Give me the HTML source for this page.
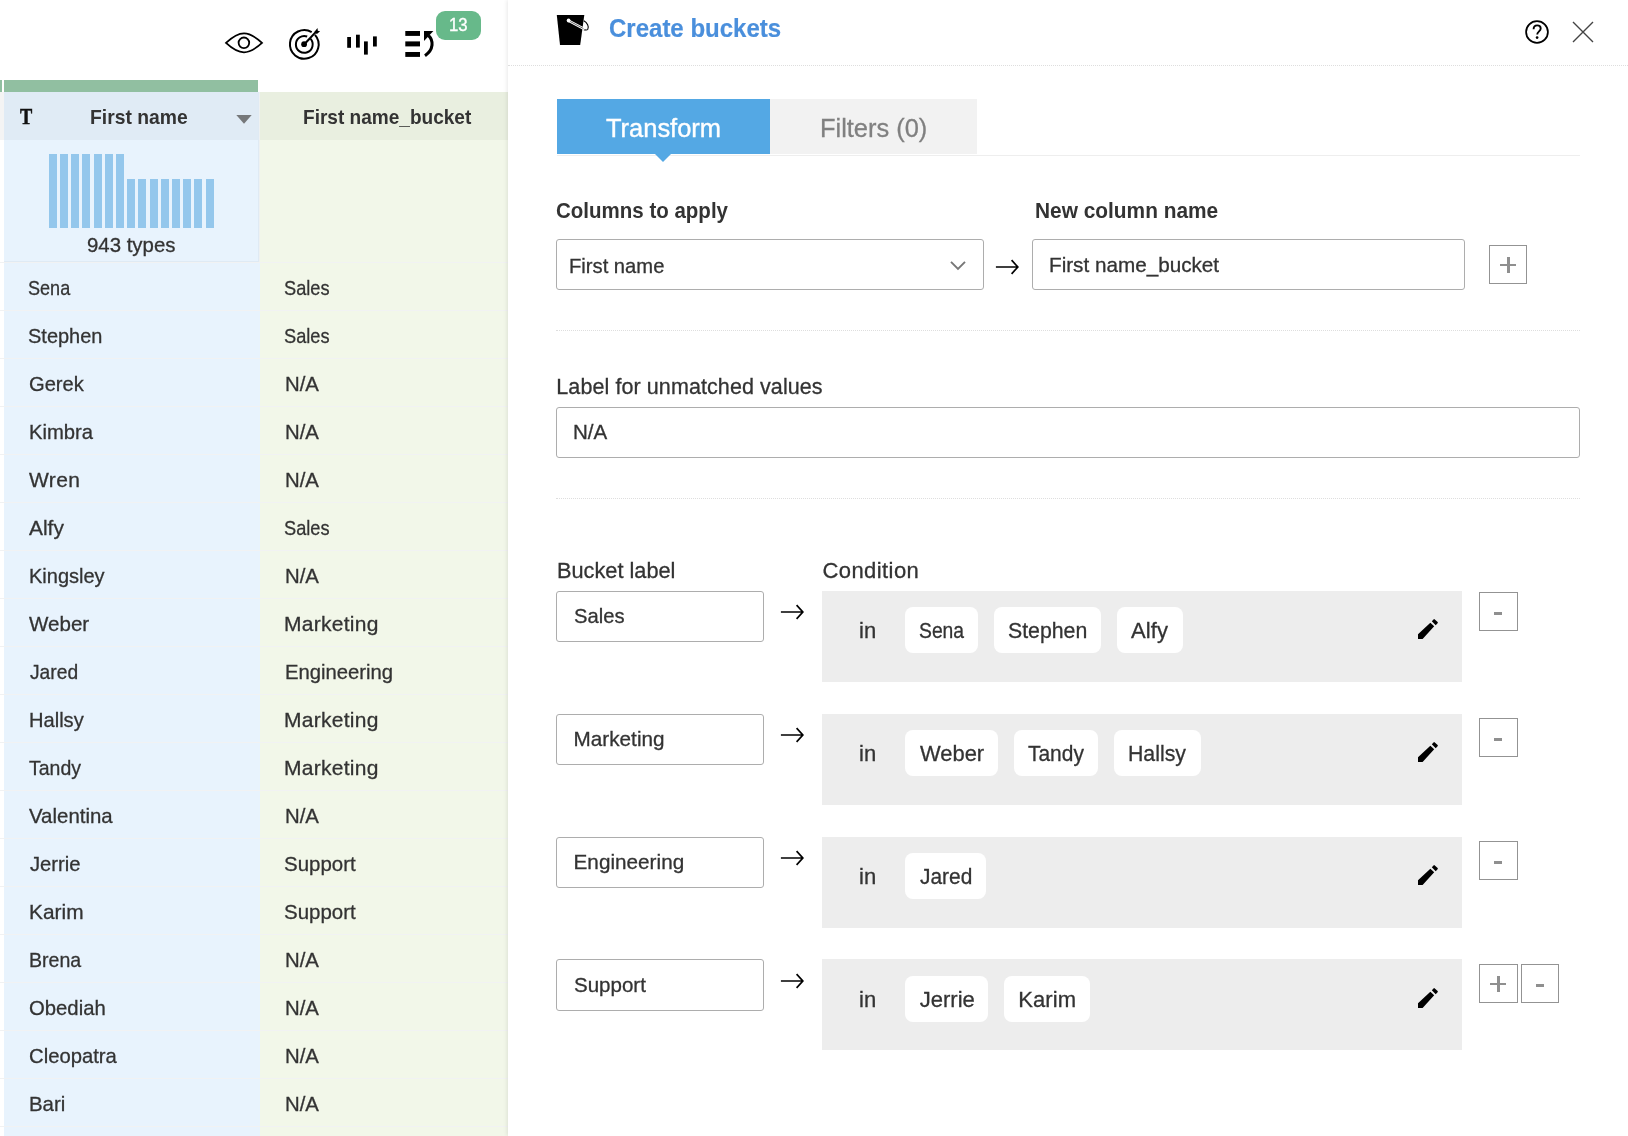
<!DOCTYPE html>
<html lang="en"><head><meta charset="utf-8"><title>Create buckets</title>
<style>
*{box-sizing:border-box;margin:0;padding:0}
html,body{width:1628px;height:1136px;overflow:hidden;background:#fff}
body{position:relative;font-family:"Liberation Sans",sans-serif}
.abs,.t,.rl,.hb,.inp,.cond,.chip,.sq,.box{position:absolute}
.t{white-space:nowrap;transform-origin:0 50%;-webkit-text-stroke:0.3px}
#left{position:absolute;left:0;top:0;width:508px;height:1136px;background:#fff;overflow:hidden}
#right{position:absolute;left:508px;top:0;width:1120px;height:1136px;background:#fff;box-shadow:-1px 0 4px rgba(0,0,0,.09)}
.rl{left:0;width:508px;height:1px;background:#f1f2f3}
.hb{width:8px;background:#94c7ec}
.inp{background:#fff;border:1px solid #adadad;border-radius:3px}
.cond{background:#ededed}
.chip{background:#fff;border-radius:8px}
.sq{width:39px;height:39px;border:1px solid #939393;background:#fff}
.sq i{position:absolute;background:#8f8f8f}
.sq .mn{left:14px;top:19px;width:8.3px;height:3px}
.sq .ph{left:10px;top:17.9px;width:16px;height:2.3px}
.sq .pv{left:16.9px;top:11.1px;width:2.8px;height:16px}
#txt{position:absolute;left:0;top:0;width:1628px;height:1136px;will-change:transform}
.dot{position:absolute;height:0;border-top:1px dotted #dedede}
</style></head>
<body>
<div id="left">
<div class="box" style="left:0;top:92px;width:4px;height:48px;background:#f4f4f4"></div>
<div class="box" style="left:4px;top:92px;width:256px;height:1044px;background:#e8f3fd"></div>
<div class="box" style="left:260px;top:92px;width:248px;height:1044px;background:#f2f7e9"></div>
<div class="box" style="left:4px;top:92px;width:255px;height:48px;background:#e0ebf5"></div>
<div class="box" style="left:260px;top:92px;width:248px;height:48px;background:#e9efe0"></div>
<div class="box" style="left:259px;top:92px;width:1px;height:170px;background:#eef1f1"></div>
<div class="box" style="left:258px;top:92px;width:1px;height:170px;background:#dfeaf4"></div>
<div class="box" style="left:4px;top:261px;width:255px;height:1px;background:#dfeaf4"></div>
<div class="box" style="left:0;top:80px;width:2px;height:12px;background:#91bfa1"></div>
<div class="box" style="left:4px;top:80px;width:254.4px;height:12px;background:#91bfa1"></div>
<div class="rl" style="top:262px"></div>
<div class="rl" style="top:310px"></div>
<div class="rl" style="top:358px"></div>
<div class="rl" style="top:406px"></div>
<div class="rl" style="top:454px"></div>
<div class="rl" style="top:502px"></div>
<div class="rl" style="top:550px"></div>
<div class="rl" style="top:598px"></div>
<div class="rl" style="top:646px"></div>
<div class="rl" style="top:694px"></div>
<div class="rl" style="top:742px"></div>
<div class="rl" style="top:790px"></div>
<div class="rl" style="top:838px"></div>
<div class="rl" style="top:886px"></div>
<div class="rl" style="top:934px"></div>
<div class="rl" style="top:982px"></div>
<div class="rl" style="top:1030px"></div>
<div class="rl" style="top:1078px"></div>
<div class="rl" style="top:1126px"></div>
<div class="hb" style="left:49.0px;top:154px;height:74px"></div>
<div class="hb" style="left:60.0px;top:154px;height:74px"></div>
<div class="hb" style="left:71.0px;top:154px;height:74px"></div>
<div class="hb" style="left:82.0px;top:154px;height:74px"></div>
<div class="hb" style="left:94.0px;top:154px;height:74px"></div>
<div class="hb" style="left:105.0px;top:154px;height:74px"></div>
<div class="hb" style="left:116.0px;top:154px;height:74px"></div>
<div class="hb" style="left:127.0px;top:179px;height:49px"></div>
<div class="hb" style="left:138.0px;top:179px;height:49px"></div>
<div class="hb" style="left:150.0px;top:179px;height:49px"></div>
<div class="hb" style="left:161.0px;top:179px;height:49px"></div>
<div class="hb" style="left:172.0px;top:179px;height:49px"></div>
<div class="hb" style="left:183.0px;top:179px;height:49px"></div>
<div class="hb" style="left:194.0px;top:179px;height:49px"></div>
<div class="hb" style="left:206.0px;top:179px;height:49px"></div>
<svg class="abs" style="left:236px;top:115px" width="16" height="9" viewBox="0 0 16 9"><path d="M0.3 0H15.7L8 8.7Z" fill="#76787a"/></svg>
<!-- toolbar icons -->
<svg class="abs" style="left:0;top:0" width="508" height="70" viewBox="0 0 508 70">
 <path d="M226 42.9C232.6 36.8 238.5 33.4 244 33.4S255.4 36.8 262 42.9C255.4 49 249.5 52.3 244 52.3S232.6 49 226 42.9Z" fill="none" stroke="#000" stroke-width="1.8" stroke-linejoin="miter"/>
 <circle cx="243.9" cy="42.8" r="5.3" fill="none" stroke="#000" stroke-width="1.8"/>
 <path d="M314.96 34.8A14.35 14.35 0 1 1 311.69 32.1" fill="none" stroke="#000" stroke-width="2"/>
 <path d="M310.64 38.89A8.4 8.4 0 1 1 307.17 36.5" fill="none" stroke="#000" stroke-width="2"/>
 <circle cx="304.1" cy="44.2" r="2.9" fill="#000"/>
 <path d="M304.3 44.2L316.2 31.6" stroke="#000" stroke-width="2.1"/>
 <path d="M314.3 31.9L317.5 27.9L317.8 30.8L320.1 31.3L316.9 33.9Z" fill="#000"/>
 <rect x="347.2" y="37" width="3.8" height="10.8" fill="#000"/><rect x="356" y="34.7" width="3.8" height="12.9" fill="#000"/>
 <rect x="364" y="41.4" width="3.8" height="13.2" fill="#000"/><rect x="373" y="36.4" width="3.8" height="10.1" fill="#000"/>
 <rect x="405.3" y="31" width="14.7" height="4.9" fill="#000"/><rect x="405.3" y="41.4" width="14.7" height="5" fill="#000"/><rect x="405.3" y="52" width="14.7" height="4.9" fill="#000"/>
 <path d="M424 31.1H433.4L424 41Z" fill="#000"/>
 <path d="M428.6 35.6C433.5 40.5 434 49.5 425 55.7" fill="none" stroke="#000" stroke-width="3.1"/>
</svg>
<div class="box" style="left:436px;top:11px;width:45px;height:29px;border-radius:9px;background:#67b98a"></div>
</div>
<div id="right"></div>
<!-- right panel (page coords) -->
<svg class="abs" style="left:550px;top:8px" width="44" height="42" viewBox="550 8 44 42">
 <path d="M556.8 15H584.3L580.2 44.9H560Z" fill="#000"/>
 <path d="M583.8 20.7C587.2 22.4 589.3 26.8 587.8 29.2C587 30.4 585.2 30.2 583 29.2" fill="none" stroke="#000" stroke-width="1.1"/>
 <path d="M568.9 20.8L583.6 28.6" stroke="#fff" stroke-width="2.5" stroke-linecap="round"/>
 <path d="M569.6 21.2L583.4 28.5" stroke="#000" stroke-width="0.6"/>
 <circle cx="568.6" cy="20.5" r="1.9" fill="#fff"/>
</svg>
<svg class="abs" style="left:1523px;top:18px" width="28" height="28" viewBox="0 0 28 28">
 <circle cx="14" cy="14" r="10.9" fill="none" stroke="#000" stroke-width="1.75"/>
 <path d="M10.6 11.2C10.6 8.6 12.2 7.4 14.2 7.4C16.4 7.4 17.7 8.8 17.7 10.6C17.7 13.2 14.2 13.6 14.2 16.6" fill="none" stroke="#000" stroke-width="1.9"/>
 <circle cx="14.1" cy="19.6" r="1.35" fill="#000"/>
</svg>
<svg class="abs" style="left:1571px;top:20px" width="24" height="24" viewBox="0 0 24 24"><path d="M2 2L22 22M22 2L2 22" stroke="#444" stroke-width="1.4"/></svg>
<div class="dot" style="left:508px;top:65px;width:1120px"></div>
<div class="box" style="left:557px;top:99px;width:213px;height:55px;background:#54a8e4"></div>
<div class="box" style="left:770px;top:99px;width:207px;height:55px;background:#f2f2f2"></div>
<div class="box" style="left:557px;top:154.6px;width:1023px;height:1px;background:#eeeeee"></div>
<svg class="abs" style="left:653px;top:154px" width="20" height="9" viewBox="0 0 20 9"><path d="M2 0H18L10 8Z" fill="#54a8e4"/></svg>
<div class="inp" style="left:556px;top:239px;width:428px;height:51px"></div>
<svg class="abs" style="left:949px;top:259px" width="18" height="13" viewBox="0 0 18 13"><path d="M2 2.8L9 10L16 2.8" fill="none" stroke="#777" stroke-width="1.9"/></svg>
<svg class="abs" style="left:995.3px;top:258px" width="26" height="18" viewBox="0 0 26 18"><path d="M0.9 9H22.6M16.6 2.1L22.85 9L16.6 15.9" fill="none" stroke="#000" stroke-width="1.7"/></svg>
<div class="inp" style="left:1032px;top:239px;width:433px;height:51px"></div>
<div class="sq" style="left:1489px;top:245px;width:38px"><i class="ph"></i><i class="pv"></i></div>
<div class="dot" style="left:556px;top:330px;width:1024px"></div>
<div class="inp" style="left:556px;top:407px;width:1024px;height:51px"></div>
<div class="dot" style="left:556px;top:497.5px;width:1024px"></div>
<div class="inp" style="left:556px;top:591px;width:208px;height:51px"></div>
<svg class="abs" style="left:780px;top:603.3px" width="26" height="18" viewBox="0 0 26 18"><path d="M0.9 9H22.6M16.6 2.1L22.85 9L16.6 15.9" fill="none" stroke="#000" stroke-width="1.7"/></svg>
<div class="cond" style="left:822px;top:591px;width:640px;height:91px"></div>
<div class="chip" style="left:905.1px;top:606.9px;width:73.0px;height:46.2px"></div>
<div class="chip" style="left:994.3px;top:606.9px;width:106.9px;height:46.2px"></div>
<div class="chip" style="left:1117.1px;top:606.9px;width:65.9px;height:46.2px"></div>
<svg class="abs" style="left:1417px;top:618.0px" width="22" height="22" viewBox="0 0 22 22"><path d="M1 16.2L13.35 4.8L17.2 8.3L5.6 21H1ZM14.8 3.2L16.5 1.4Q17.1 0.8 17.8 1.4L20.6 4Q21.2 4.6 20.6 5.2L18.7 7.2Z" fill="#000"/></svg>
<div class="sq" style="left:1479px;top:592px"><i class="mn"></i></div>
<div class="inp" style="left:556px;top:714px;width:208px;height:51px"></div>
<svg class="abs" style="left:780px;top:726.3px" width="26" height="18" viewBox="0 0 26 18"><path d="M0.9 9H22.6M16.6 2.1L22.85 9L16.6 15.9" fill="none" stroke="#000" stroke-width="1.7"/></svg>
<div class="cond" style="left:822px;top:714px;width:640px;height:91px"></div>
<div class="chip" style="left:905.1px;top:729.9px;width:92.9px;height:46.2px"></div>
<div class="chip" style="left:1013.9px;top:729.9px;width:84.1px;height:46.2px"></div>
<div class="chip" style="left:1114.2px;top:729.9px;width:86.5px;height:46.2px"></div>
<svg class="abs" style="left:1417px;top:741.0px" width="22" height="22" viewBox="0 0 22 22"><path d="M1 16.2L13.35 4.8L17.2 8.3L5.6 21H1ZM14.8 3.2L16.5 1.4Q17.1 0.8 17.8 1.4L20.6 4Q21.2 4.6 20.6 5.2L18.7 7.2Z" fill="#000"/></svg>
<div class="sq" style="left:1479px;top:718px"><i class="mn"></i></div>
<div class="inp" style="left:556px;top:837px;width:208px;height:51px"></div>
<svg class="abs" style="left:780px;top:849.3px" width="26" height="18" viewBox="0 0 26 18"><path d="M0.9 9H22.6M16.6 2.1L22.85 9L16.6 15.9" fill="none" stroke="#000" stroke-width="1.7"/></svg>
<div class="cond" style="left:822px;top:837px;width:640px;height:91px"></div>
<div class="chip" style="left:905.0px;top:852.9px;width:81.0px;height:46.2px"></div>
<svg class="abs" style="left:1417px;top:864.0px" width="22" height="22" viewBox="0 0 22 22"><path d="M1 16.2L13.35 4.8L17.2 8.3L5.6 21H1ZM14.8 3.2L16.5 1.4Q17.1 0.8 17.8 1.4L20.6 4Q21.2 4.6 20.6 5.2L18.7 7.2Z" fill="#000"/></svg>
<div class="sq" style="left:1479px;top:841px"><i class="mn"></i></div>
<div class="inp" style="left:556px;top:959px;width:208px;height:52px"></div>
<svg class="abs" style="left:780px;top:972.3px" width="26" height="18" viewBox="0 0 26 18"><path d="M0.9 9H22.6M16.6 2.1L22.85 9L16.6 15.9" fill="none" stroke="#000" stroke-width="1.7"/></svg>
<div class="cond" style="left:822px;top:959px;width:640px;height:91px"></div>
<div class="chip" style="left:905.1px;top:975.9px;width:82.8px;height:46.2px"></div>
<div class="chip" style="left:1004.1px;top:975.9px;width:86.0px;height:46.2px"></div>
<svg class="abs" style="left:1417px;top:987.0px" width="22" height="22" viewBox="0 0 22 22"><path d="M1 16.2L13.35 4.8L17.2 8.3L5.6 21H1ZM14.8 3.2L16.5 1.4Q17.1 0.8 17.8 1.4L20.6 4Q21.2 4.6 20.6 5.2L18.7 7.2Z" fill="#000"/></svg>
<div class="sq" style="left:1479px;top:964px"><i class="ph"></i><i class="pv"></i></div>
<div class="sq" style="left:1521px;top:964px;width:38px"><i class="mn"></i></div>
<div id="txt">
<span class="t" id="n0" style="left:28.40px;top:267px;line-height:41px;height:41px;font-size:21px;color:#333;letter-spacing:0.000px;transform:scaleX(0.8602)">Sena</span>
<span class="t" id="b0" style="left:284.40px;top:267px;line-height:41px;height:41px;font-size:21px;color:#333;letter-spacing:0.000px;transform:scaleX(0.8677)">Sales</span>
<span class="t" id="n1" style="left:28.36px;top:315px;line-height:41px;height:41px;font-size:21px;color:#333;letter-spacing:0.000px;transform:scaleX(0.9516)">Stephen</span>
<span class="t" id="b1" style="left:284.40px;top:315px;line-height:41px;height:41px;font-size:21px;color:#333;letter-spacing:0.000px;transform:scaleX(0.8677)">Sales</span>
<span class="t" id="n2" style="left:28.56px;top:363px;line-height:41px;height:41px;font-size:21px;color:#333;letter-spacing:0.000px;transform:scaleX(0.9584)">Gerek</span>
<span class="t" id="b2" style="left:284.64px;top:363px;line-height:41px;height:41px;font-size:21px;color:#333;letter-spacing:0.000px;transform:scaleX(0.9693)">N/A</span>
<span class="t" id="n3" style="left:28.64px;top:411px;line-height:41px;height:41px;font-size:21px;color:#333;letter-spacing:0.000px;transform:scaleX(0.9638)">Kimbra</span>
<span class="t" id="b3" style="left:284.64px;top:411px;line-height:41px;height:41px;font-size:21px;color:#333;letter-spacing:0.000px;transform:scaleX(0.9693)">N/A</span>
<span class="t" id="n4" style="left:29.06px;top:459px;line-height:41px;height:41px;font-size:21px;color:#333;letter-spacing:0.378px">Wren</span>
<span class="t" id="b4" style="left:284.64px;top:459px;line-height:41px;height:41px;font-size:21px;color:#333;letter-spacing:0.000px;transform:scaleX(0.9693)">N/A</span>
<span class="t" id="n5" style="left:29.12px;top:507px;line-height:41px;height:41px;font-size:21px;color:#333;letter-spacing:0.000px;transform:scaleX(0.9954)">Alfy</span>
<span class="t" id="b5" style="left:284.40px;top:507px;line-height:41px;height:41px;font-size:21px;color:#333;letter-spacing:0.000px;transform:scaleX(0.8677)">Sales</span>
<span class="t" id="n6" style="left:28.83px;top:555px;line-height:41px;height:41px;font-size:21px;color:#333;letter-spacing:0.000px;transform:scaleX(0.9527)">Kingsley</span>
<span class="t" id="b6" style="left:284.64px;top:555px;line-height:41px;height:41px;font-size:21px;color:#333;letter-spacing:0.000px;transform:scaleX(0.9693)">N/A</span>
<span class="t" id="n7" style="left:29.12px;top:603px;line-height:41px;height:41px;font-size:21px;color:#333;letter-spacing:0.000px;transform:scaleX(0.9792)">Weber</span>
<span class="t" id="b7" style="left:284.00px;top:603px;line-height:41px;height:41px;font-size:21px;color:#333;letter-spacing:0.280px">Marketing</span>
<span class="t" id="n8" style="left:29.57px;top:651px;line-height:41px;height:41px;font-size:21px;color:#333;letter-spacing:0.000px;transform:scaleX(0.9160)">Jared</span>
<span class="t" id="b8" style="left:284.52px;top:651px;line-height:41px;height:41px;font-size:21px;color:#333;letter-spacing:0.000px;transform:scaleX(0.9644)">Engineering</span>
<span class="t" id="n9" style="left:28.54px;top:699px;line-height:41px;height:41px;font-size:21px;color:#333;letter-spacing:0.000px;transform:scaleX(0.9566)">Hallsy</span>
<span class="t" id="b9" style="left:284.00px;top:699px;line-height:41px;height:41px;font-size:21px;color:#333;letter-spacing:0.280px">Marketing</span>
<span class="t" id="n10" style="left:28.85px;top:747px;line-height:41px;height:41px;font-size:21px;color:#333;letter-spacing:0.000px;transform:scaleX(0.9283)">Tandy</span>
<span class="t" id="b10" style="left:284.00px;top:747px;line-height:41px;height:41px;font-size:21px;color:#333;letter-spacing:0.280px">Marketing</span>
<span class="t" id="n11" style="left:29.02px;top:795px;line-height:41px;height:41px;font-size:21px;color:#333;letter-spacing:0.000px;transform:scaleX(0.9731)">Valentina</span>
<span class="t" id="b11" style="left:284.64px;top:795px;line-height:41px;height:41px;font-size:21px;color:#333;letter-spacing:0.000px;transform:scaleX(0.9693)">N/A</span>
<span class="t" id="n12" style="left:29.57px;top:843px;line-height:41px;height:41px;font-size:21px;color:#333;letter-spacing:0.000px;transform:scaleX(0.9637)">Jerrie</span>
<span class="t" id="b12" style="left:284.07px;top:843px;line-height:41px;height:41px;font-size:21px;color:#333;letter-spacing:0.000px;transform:scaleX(0.9737)">Support</span>
<span class="t" id="n13" style="left:28.73px;top:891px;line-height:41px;height:41px;font-size:21px;color:#333;letter-spacing:0.000px;transform:scaleX(0.9944)">Karim</span>
<span class="t" id="b13" style="left:284.07px;top:891px;line-height:41px;height:41px;font-size:21px;color:#333;letter-spacing:0.000px;transform:scaleX(0.9737)">Support</span>
<span class="t" id="n14" style="left:28.96px;top:939px;line-height:41px;height:41px;font-size:21px;color:#333;letter-spacing:0.000px;transform:scaleX(0.9321)">Brena</span>
<span class="t" id="b14" style="left:284.64px;top:939px;line-height:41px;height:41px;font-size:21px;color:#333;letter-spacing:0.000px;transform:scaleX(0.9693)">N/A</span>
<span class="t" id="n15" style="left:28.78px;top:987px;line-height:41px;height:41px;font-size:21px;color:#333;letter-spacing:0.000px;transform:scaleX(0.9664)">Obediah</span>
<span class="t" id="b15" style="left:284.64px;top:987px;line-height:41px;height:41px;font-size:21px;color:#333;letter-spacing:0.000px;transform:scaleX(0.9693)">N/A</span>
<span class="t" id="n16" style="left:28.74px;top:1035px;line-height:41px;height:41px;font-size:21px;color:#333;letter-spacing:0.000px;transform:scaleX(0.9646)">Cleopatra</span>
<span class="t" id="b16" style="left:284.64px;top:1035px;line-height:41px;height:41px;font-size:21px;color:#333;letter-spacing:0.000px;transform:scaleX(0.9693)">N/A</span>
<span class="t" id="n17" style="left:28.87px;top:1083px;line-height:41px;height:41px;font-size:21px;color:#333;letter-spacing:0.000px;transform:scaleX(0.9720)">Bari</span>
<span class="t" id="b17" style="left:284.64px;top:1083px;line-height:41px;height:41px;font-size:21px;color:#333;letter-spacing:0.000px;transform:scaleX(0.9693)">N/A</span>
<span class="t" id="hT" style="left:20.23px;top:96px;line-height:41px;height:41px;font-size:22.5px;font-weight:700;-webkit-text-stroke:0;-webkit-text-stroke:0.5px;font-family:'Liberation Serif', serif;color:#111;letter-spacing:0.000px;transform:scaleX(0.8165)">T</span>
<span class="t" id="hfn" style="left:89.94px;top:96px;line-height:41px;height:41px;font-size:21px;font-weight:700;-webkit-text-stroke:0;color:#333;letter-spacing:0.000px;transform:scaleX(0.9196)">First name</span>
<span class="t" id="hfb" style="left:302.74px;top:96px;line-height:41px;height:41px;font-size:21px;font-weight:700;-webkit-text-stroke:0;color:#333;letter-spacing:0.000px;transform:scaleX(0.9070)">First name_bucket</span>
<span class="t" id="types" style="left:87.31px;top:224px;line-height:41px;height:41px;font-size:21px;color:#333;letter-spacing:0.000px;transform:scaleX(0.9713)">943 types</span>
<span class="t" id="badge" style="left:449.17px;top:5px;line-height:40px;height:40px;font-size:18px;-webkit-text-stroke:0.35px;color:#fff;letter-spacing:0.000px;transform:scaleX(0.9306)">13</span>
<span class="t" id="title" style="left:608.95px;top:8px;line-height:40px;height:40px;font-size:25.5px;font-weight:700;-webkit-text-stroke:0;-webkit-text-stroke:0.2px;color:#4a8fdc;letter-spacing:0.000px;transform:scaleX(0.9414)">Create buckets</span>
<span class="t" id="tab1" style="left:605.89px;top:108px;line-height:40px;height:40px;font-size:26.5px;-webkit-text-stroke:0.4px;color:#fff;letter-spacing:0.000px;transform:scaleX(0.9606)">Transform</span>
<span class="t" id="tab2" style="left:819.97px;top:108px;line-height:40px;height:40px;font-size:26.5px;-webkit-text-stroke:0.3px;color:#808080;letter-spacing:0.000px;transform:scaleX(0.9588)">Filters (0)</span>
<span class="t" id="l1" style="left:556.09px;top:190px;line-height:41px;height:41px;font-size:22px;font-weight:700;-webkit-text-stroke:0;color:#333;letter-spacing:0.000px;transform:scaleX(0.9318)">Columns to apply</span>
<span class="t" id="l2" style="left:1034.64px;top:190px;line-height:41px;height:41px;font-size:22px;font-weight:700;-webkit-text-stroke:0;color:#333;letter-spacing:0.000px;transform:scaleX(0.9484)">New column name</span>
<span class="t" id="sel" style="left:568.53px;top:245px;line-height:41px;height:41px;font-size:21px;color:#333;letter-spacing:0.000px;transform:scaleX(0.9616)">First name</span>
<span class="t" id="in1" style="left:1049.48px;top:244px;line-height:41px;height:41px;font-size:20.7px;color:#333;letter-spacing:0.000px;transform:scaleX(0.9997)">First name_bucket</span>
<span class="t" id="l3" style="left:556.33px;top:367px;line-height:40px;height:40px;font-size:21.5px;color:#333;letter-spacing:0.085px">Label for unmatched values</span>
<span class="t" id="in2" style="left:572.94px;top:411px;line-height:41px;height:41px;font-size:20.7px;color:#333;letter-spacing:0.000px;transform:scaleX(0.9935)">N/A</span>
<span class="t" id="l4" style="left:556.70px;top:550px;line-height:41px;height:41px;font-size:22px;color:#333;letter-spacing:0.000px;transform:scaleX(0.9881)">Bucket label</span>
<span class="t" id="l5" style="left:822.38px;top:550px;line-height:41px;height:41px;font-size:22px;color:#333;letter-spacing:0.440px">Condition</span>
<span class="t" id="lab0" style="left:574.18px;top:595px;line-height:41px;height:41px;font-size:20.7px;color:#333;letter-spacing:0.000px;transform:scaleX(0.9755)">Sales</span>
<span class="t" id="in0x" style="left:858.96px;top:610px;line-height:41px;height:41px;font-size:22px;color:#333;letter-spacing:0.000px;transform:scaleX(1.0001)">in</span>
<span class="t" id="chip0_0" style="left:918.86px;top:610px;line-height:41px;height:41px;font-size:22px;color:#333;letter-spacing:0.000px;transform:scaleX(0.8775)">Sena</span>
<span class="t" id="chip0_1" style="left:1008.35px;top:610px;line-height:41px;height:41px;font-size:22px;color:#333;letter-spacing:0.000px;transform:scaleX(0.9674)">Stephen</span>
<span class="t" id="chip0_2" style="left:1131.02px;top:610px;line-height:41px;height:41px;font-size:22px;color:#333;letter-spacing:0.107px">Alfy</span>
<span class="t" id="lab1" style="left:573.47px;top:718px;line-height:41px;height:41px;font-size:20.7px;color:#333;letter-spacing:0.035px">Marketing</span>
<span class="t" id="in1x" style="left:858.96px;top:733px;line-height:41px;height:41px;font-size:22px;color:#333;letter-spacing:0.000px;transform:scaleX(1.0001)">in</span>
<span class="t" id="chip1_0" style="left:920.03px;top:733px;line-height:41px;height:41px;font-size:22px;color:#333;letter-spacing:0.000px;transform:scaleX(0.9964)">Weber</span>
<span class="t" id="chip1_1" style="left:1028.33px;top:733px;line-height:41px;height:41px;font-size:22px;color:#333;letter-spacing:0.000px;transform:scaleX(0.9519)">Tandy</span>
<span class="t" id="chip1_2" style="left:1127.89px;top:733px;line-height:41px;height:41px;font-size:22px;color:#333;letter-spacing:0.000px;transform:scaleX(0.9675)">Hallsy</span>
<span class="t" id="lab2" style="left:573.54px;top:841px;line-height:41px;height:41px;font-size:20.7px;color:#333;letter-spacing:0.021px">Engineering</span>
<span class="t" id="in2x" style="left:858.96px;top:856px;line-height:41px;height:41px;font-size:22px;color:#333;letter-spacing:0.000px;transform:scaleX(1.0001)">in</span>
<span class="t" id="chip2_0" style="left:919.73px;top:856px;line-height:41px;height:41px;font-size:22px;color:#333;letter-spacing:0.000px;transform:scaleX(0.9500)">Jared</span>
<span class="t" id="lab3" style="left:573.71px;top:964px;line-height:41px;height:41px;font-size:20.7px;color:#333;letter-spacing:0.000px;transform:scaleX(0.9918)">Support</span>
<span class="t" id="in3x" style="left:858.96px;top:979px;line-height:41px;height:41px;font-size:22px;color:#333;letter-spacing:0.000px;transform:scaleX(1.0001)">in</span>
<span class="t" id="chip3_0" style="left:919.74px;top:979px;line-height:41px;height:41px;font-size:22px;color:#333;letter-spacing:0.002px">Jerrie</span>
<span class="t" id="chip3_1" style="left:1018.22px;top:979px;line-height:41px;height:41px;font-size:22px;color:#333;letter-spacing:0.111px">Karim</span>
</div>
</body></html>
